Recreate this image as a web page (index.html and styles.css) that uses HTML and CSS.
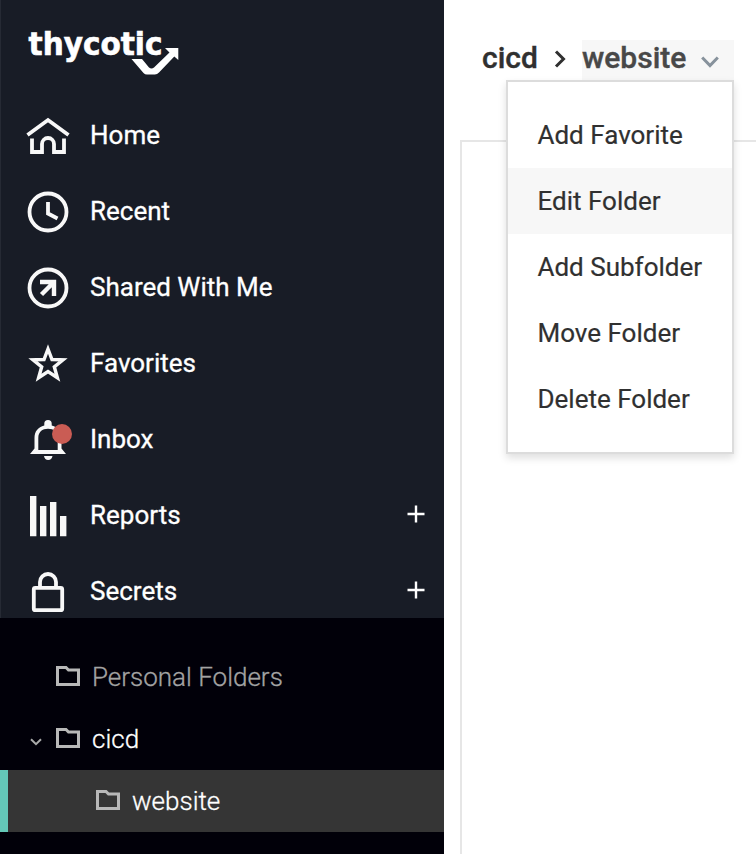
FILE: index.html
```html
<!DOCTYPE html>
<html lang="en">
<head>
<meta charset="utf-8">
<title>Folders</title>
<link rel="stylesheet" href="styles.css">
</head>
<body>
<div class="app">
  <aside class="sidebar">
    <svg class="logo" viewBox="0 0 160 50" role="img" aria-label="thycotic">
      <text class="logo-text" x=".5" y="27.500" textLength="134" lengthAdjust="spacingAndGlyphs">thycotic</text>
      <path d="M103.500 32H114l7 8.500q2.500 2 5 0L141.500 25.500 137 21h13.300v12l-4-3.500L131 45.500q-2 2-4 2h-8q-2 0-3.500-1.500z"/>
    </svg>
    <nav class="nav">
      <a class="nav-item"><svg class="icon" viewBox="0 0 44 44"><path d="M1.500 21 22 6l20.500 15M6 24.500V38h10v-8a6 6 0 0 1 12 0v8h10V24.500"/></svg><span class="label">Home</span></a>
      <a class="nav-item"><svg class="icon" viewBox="0 0 44 44"><circle cx="22" cy="22" r="18.500"/><path d="M22 12v11.500l9.500 5"/></svg><span class="label">Recent</span></a>
      <a class="nav-item"><svg class="icon" viewBox="0 0 44 44"><circle cx="22" cy="22" r="18.500"/><path class="heavy" d="M14 16h14v14M28 16 15.500 28.500"/></svg><span class="label">Shared With Me</span></a>
      <a class="nav-item"><svg class="icon" viewBox="0 0 44 44"><path class="star" d="m22 7 4 10.500 11 .4-8.700 6.900 3.100 10.900L22 29.500l-9.400 6.200 3.100-10.900L7 17.900l11-.4z"/></svg><span class="label">Favorites</span></a>
      <a class="nav-item"><span class="icon-wrap"><svg class="icon" viewBox="0 0 44 44"><path class="solid" fill-rule="evenodd" d="M18.300 7.500V5.500a3.700 3.500 0 0 1 7.400 0v2C32 9 35.500 13.500 35.500 20v10.500L40 36H4l4.500-5.500V20c0-6.500 3.500-11 9.800-12.500zM12.300 20v12h19.400V20c0-6-4-9.200-9.700-9.200s-9.700 3.200-9.700 9.200zM18 38h8.500q-.8 4-4.300 4t-4.200-4z"/></svg><i class="badge"></i></span><span class="label">Inbox</span></a>
      <a class="nav-item"><svg class="icon" viewBox="0 0 44 44"><path class="solid" d="M4 2h6.400v40.300H4zM14 12h6.400v30.300H14zM24 8h6.400v34.300H24zM34 22h6.400v20.300H34z"/></svg><span class="label">Reports</span><svg class="plus" viewBox="0 0 18 18"><path d="M9 .5v17M.5 9h17"/></svg></a>
      <a class="nav-item"><svg class="icon" viewBox="0 0 44 44"><rect x="7.800" y="17.800" width="28.400" height="22.400" rx="1.500"/><path d="M14 17v-5a8 8 0 0 1 16 0v5"/></svg><span class="label">Secrets</span><svg class="plus" viewBox="0 0 18 18"><path d="M9 .5v17M.5 9h17"/></svg></a>
    </nav>
    <div class="tree">
      <a class="folder muted"><span class="twisty"></span><svg class="folder-icon" viewBox="0 0 24 20"><path d="M1.500 18.500v-17h8.500l2.500 2.500h10v14.500z"/></svg>Personal Folders</a>
      <a class="folder"><span class="twisty"><svg class="caret" viewBox="0 0 12 8"><path d="m1 1.200 5 5 5-5"/></svg></span><svg class="folder-icon" viewBox="0 0 24 20"><path d="M1.500 18.500v-17h8.500l2.500 2.500h10v14.500z"/></svg>cicd</a>
      <a class="folder child selected"><svg class="folder-icon" viewBox="0 0 24 20"><path d="M1.500 18.500v-17h8.500l2.500 2.500h10v14.500z"/></svg>website</a>
    </div>
  </aside>
  <main class="main">
    <header class="crumbs">
      <span class="crumb">cicd</span>
      <svg class="sep" viewBox="0 0 12 18"><path d="m2 1.500 7.500 7.500L2 16.500"/></svg>
      <div class="current">
        <span>website</span>
        <svg class="chevron" viewBox="0 0 18 12"><path d="m1.200 1.500 7.800 8 7.800-8"/></svg>
        <ul class="menu">
          <li>Add Favorite</li>
          <li class="active">Edit Folder</li>
          <li>Add Subfolder</li>
          <li>Move Folder</li>
          <li>Delete Folder</li>
        </ul>
      </div>
    </header>
    <section class="panel"></section>
  </main>
</div>
</body>
</html>
```
FILE: styles.css
```css
* { box-sizing: border-box; }
body {
  margin: 0;
  font-family: Roboto, "Liberation Sans", sans-serif;
  font-size: 26px;
  color: #303030;
  background: #fff;
}
svg { display: block; flex: none; overflow: visible; }
.app { display: flex; height: 854px; overflow: hidden; }
.sidebar {
  width: 444px;
  flex: none;
  display: flex;
  flex-direction: column;
  background: #181c26;
  color: #fff;
  box-shadow: inset 1px 0 #262a34;
}
.logo { width: 160px; height: 50px; margin: 27px 0 0 28px; fill: #fff; }
.logo-text {
  font: bold 32px "DejaVu Sans Condensed", "DejaVu Sans", sans-serif;
  stroke: #fff;
  stroke-width: .6;
}
.nav {
  display: flex;
  flex-direction: column;
  gap: 32px;
  padding: 37px 19px 4px 26px;
}
.nav-item { display: flex; align-items: center; height: 44px; }
.label { margin: -2px 0 0 20px; line-height: 30px; flex: 1; -webkit-text-stroke: .3px #fff; }
.icon { width: 44px; height: 44px; fill: none; stroke: #f8f8f8; stroke-width: 3.8; }
.icon .heavy { stroke-width: 4.4; }
.icon .star { stroke-width: 3.4; }
.icon .solid { fill: #f8f8f8; stroke: none; }
.icon-wrap { position: relative; }
.badge {
  position: absolute;
  left: 26px;
  top: 6px;
  width: 20px;
  height: 20px;
  border-radius: 50%;
  background: #ca5c54;
}
.plus { width: 18px; height: 18px; margin-top: -4px; stroke: #fff; stroke-width: 2.4; }
.tree { flex: 1; padding-top: 28px; background: #010009; font-weight: 300; }
.folder {
  display: flex;
  align-items: center;
  height: 62px;
  padding-left: 30px;
  -webkit-text-stroke: .3px currentColor;
}
.folder.muted { color: #a3a3a3; }
.folder.child { padding-left: 88px; border-left: 8px solid #64c8b8; }
.folder.selected { background: #353535; }
.twisty { width: 26px; }
.caret { width: 12px; height: 8px; margin-top: 6px; fill: none; stroke: #aaa; stroke-width: 2; }
.folder-icon {
  width: 24px;
  height: 20px;
  margin: -2px 12px 0 0;
  fill: none;
  stroke: #b8b8b8;
  stroke-width: 3;
}
.main { flex: 1; min-width: 0; padding: 40px 0 0 16px; display: flex; flex-direction: column; }
.crumbs {
  display: flex;
  align-items: center;
  height: 40px;
  padding-left: 22px;
  font-size: 30px;
  line-height: 36px;
  font-weight: 500;
}
.crumb { width: 56px; }
.crumb, .current > span { -webkit-text-stroke: .4px currentColor; }
.sep { width: 12px; height: 18px; margin: -3px 16px 0 16px; fill: none; stroke: #303030; stroke-width: 3; }
.current {
  position: relative;
  display: flex;
  align-items: center;
  width: 152px;
  height: 40px;
  background: #f7f7f7;
  color: #484848;
}
.current > span, .crumb { margin-top: -4px; }
.chevron { width: 18px; height: 12px; margin: 4px 0 0 15px; fill: none; stroke: #87929c; stroke-width: 3; }
.menu {
  position: absolute;
  right: 0;
  top: 40px;
  width: 228px;
  height: 374px;
  margin: 0;
  padding: 20px 0;
  list-style: none;
  border: 2px solid #dcdcdc;
  background: #fff;
  box-shadow: 0 4px 8px rgba(0, 0, 0, .13);
  color: #303030;
  font-size: 26px;
  font-weight: 400;
}
.menu li { height: 66px; padding-left: 29.500px; line-height: 66px; white-space: nowrap; -webkit-text-stroke: .2px currentColor; }
.menu .active { background: #f7f7f7; }
.panel { flex: 1; margin-top: 60px; border: solid #e6e6e6; border-width: 2px 0 0 2px; }
```
